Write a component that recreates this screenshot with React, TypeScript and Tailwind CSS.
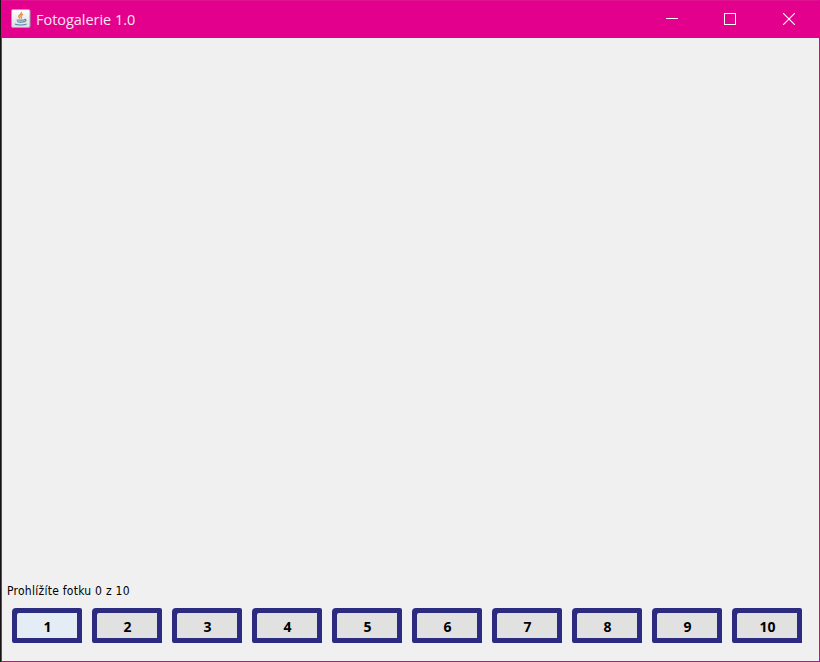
import { useState } from 'react';

const photos = [1, 2, 3, 4, 5, 6, 7, 8, 9, 10];

function JavaIcon() {
  return (
    <svg className="mb-[2px] h-[19px] w-[20px]" viewBox="0 0 20 19" fill="none">
      <defs>
        <linearGradient id="tile" x1="0" y1="0" x2="0" y2="1">
          <stop offset="0" stopColor="#ffffff" />
          <stop offset="1" stopColor="#d9dee2" />
        </linearGradient>
      </defs>
      <rect x="0.5" y="0.5" width="18.5" height="18" rx="1.5" fill="url(#tile)" stroke="#8fa9b8" />
      <path d="M10.3 3c1.2 2-3 2.8-2.5 4.6.2.7 1 1.2 1.3 1.8M12 5.2C9.5 6.3 9.6 7.2 10.4 8.1c.4.5.2 1-.3 1.4" stroke="#ee8e42" strokeWidth="1.5" />
      <path d="M5.5 10.4h8v1.2c0 1.8-1.4 2.4-3.8 2.4s-3.8-.6-3.8-2.2z" fill="#7394ae" />
      <path d="M6.5 11.8c2 .6 4.5.6 6 0" stroke="#dce4e9" strokeWidth=".7" />
      <path d="M13.2 10.5c2.6-.6 2.4 2-.6 2.5" stroke="#5482a5" strokeWidth="1.1" />
      <path d="M4 15c2 1.3 9 1.3 11.5 0" stroke="#5482a5" strokeWidth="1.2" />
    </svg>
  );
}

export default function App() {
  const [active, setActive] = useState(1);
  return (
    <div className="h-[662px] w-[820px] bg-[#161214] pl-px">
      <div className="flex h-full flex-col border-r border-b border-l border-[#e3008c] bg-[#f0f0f0]">
        <header className="flex h-[38px] shrink-0 items-center justify-between border-t border-[#df128f] bg-[#e3008c] text-white">
          <div className="flex items-center pl-[9px]">
            <JavaIcon />
            <h1 className="ml-[5px] whitespace-nowrap font-['Open_Sans',sans-serif] text-[14.5px] leading-5 font-normal tracking-[-0.03px] text-[#fce5f3]">
              Fotogalerie 1.0
            </h1>
          </div>
          <div className="mr-[24px] mb-[2px] flex items-center gap-[46px]">
            <svg className="h-3 w-3" viewBox="0 0 12 12" shapeRendering="crispEdges"><path d="M0 5.5h12" stroke="white" /></svg>
            <svg className="h-3 w-3" viewBox="0 0 12 12" shapeRendering="crispEdges"><path d="M.5.5h11v11H.5z" fill="none" stroke="white" /></svg>
            <svg className="ml-px h-3 w-3" viewBox="0 0 12 12"><path d="m0 0 12 12M12 0 0 12" stroke="white" strokeWidth="1.1" /></svg>
          </div>
        </header>
        <main className="flex-1" />
        <footer className="h-[80px] shrink-0 pt-px">
          <p className="pl-[5px] whitespace-nowrap font-['DejaVu_Sans_Condensed','DejaVu_Sans',sans-serif] text-[12px] leading-[18px] tracking-[0.26px] text-black">
            Prohlížíte fotku 0 z 10
          </p>
          <nav className="mt-[8px] flex gap-[10px] pl-[10px]">
            {photos.map((n) => (
              <button
                key={n}
                onClick={() => setActive(n)}
                className="h-[35px] w-[70px] rounded-tl-[4px] rounded-tr-[2px] rounded-bl-[2px] bg-[#2b2c80] p-[5px] font-['Open_Sans',sans-serif] text-[14px] leading-5 font-bold text-black"
              >
                <span className={`flex h-full items-center justify-center rounded-tl-[2px] pt-0.5 pl-px ${active === n ? 'bg-[#e4edf6]' : 'bg-[#e1e1e1]'}`}>{n}</span>
              </button>
            ))}
          </nav>
        </footer>
      </div>
    </div>
  );
}
